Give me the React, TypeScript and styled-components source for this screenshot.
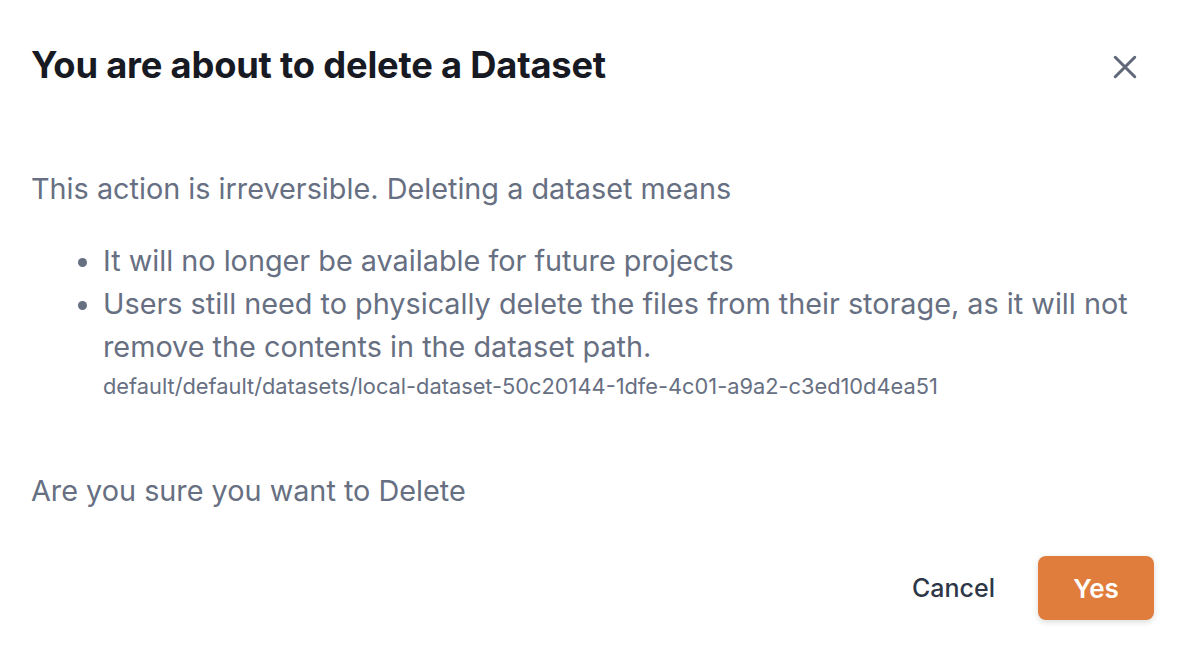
import React from 'react';
import styled, { createGlobalStyle } from 'styled-components';

const GlobalStyle = createGlobalStyle`
  html, body {
    margin: 0;
    padding: 0;
    background: #ffffff;
    font-family: Inter, "Noto Sans", sans-serif;
  }
`;

const Modal = styled.div`
  width: 1184px;
  height: 650px;
  box-sizing: border-box;
  padding: 0 30px 30px 31px;
  display: flex;
  flex-direction: column;
`;

const Header = styled.div`
  display: flex;
  align-items: center;
  justify-content: space-between;
  height: 130px;
`;

const Title = styled.h1`
  margin: 0;
  font-size: 36.3px;
  font-weight: 700;
  color: #171923;
  letter-spacing: -0.2px;
`;

const CloseButton = styled.button`
  border: none;
  background: transparent;
  padding: 0;
  width: 44px;
  height: 44px;
  display: flex;
  align-items: center;
  justify-content: center;
  color: #5f6779;
  cursor: pointer;
  margin-right: 7px;
  margin-top: 4px;
`;

const Body = styled.div`
  display: flex;
  flex-direction: column;
  margin-top: 37px;
  color: #676f82;
  font-size: 28.8px;
  line-height: 43px;
`;

const Text = styled.p<{ $gap?: number }>`
  margin: ${(p) => p.$gap ?? 0}px 0 0;
`;

const List = styled.ul`
  margin: 29px 0 0;
  padding-left: 72px;
`;

const Item = styled.li`
  margin: 0;
`;

const Path = styled.div`
  font-size: 21.8px;
  line-height: 37px;
`;

const Footer = styled.div`
  margin-top: auto;
  display: flex;
  justify-content: flex-end;
  align-items: center;
  gap: 15px;
`;

const Button = styled.button<{ $primary?: boolean }>`
  height: 64px;
  min-width: 116px;
  padding: 0 28px;
  border: none;
  border-radius: 8px;
  font-family: inherit;
  font-size: ${(p) => (p.$primary ? 26 : 25)}px;
  font-weight: ${(p) => (p.$primary ? 600 : 500)};
  cursor: pointer;
  background: ${(p) => (p.$primary ? '#e07d3c' : 'transparent')};
  color: ${(p) => (p.$primary ? '#ffffff' : '#2d3748')};
  box-shadow: ${(p) => (p.$primary ? '0 2px 6px rgba(0,0,0,0.15)' : 'none')};
`;

const App = () => {
  return (
    <>
      <GlobalStyle />
      <Modal>
        <Header>
          <Title>You are about to delete a Dataset</Title>
          <CloseButton aria-label="Close">
            <svg width="26" height="26" viewBox="0 0 24 24">
              <path d="M3 3 L21 21 M21 3 L3 21" stroke="currentColor" strokeWidth="2.8" strokeLinecap="round" />
            </svg>
          </CloseButton>
        </Header>
        <Body>
          <Text>This action is irreversible. Deleting a dataset means</Text>
          <List>
            <Item>It will no longer be available for future projects</Item>
            <Item>
              Users still need to physically delete the files from their storage, as it will not remove the contents in
              the dataset path.
              <Path>default/default/datasets/local-dataset-50c20144-1dfe-4c01-a9a2-c3ed10d4ea51</Path>
            </Item>
          </List>
          <Text $gap={64}>Are you sure you want to Delete</Text>
        </Body>
        <Footer>
          <Button>Cancel</Button>
          <Button $primary>Yes</Button>
        </Footer>
      </Modal>
    </>
  );
};

export default App;
